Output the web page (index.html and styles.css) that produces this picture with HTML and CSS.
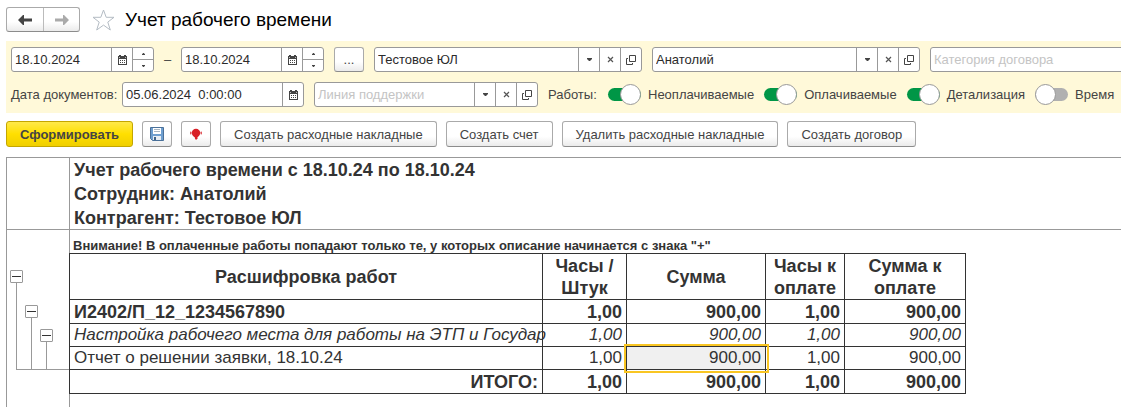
FILE: index.html
```
<!DOCTYPE html>
<html lang="ru">

<head>
<meta charset="UTF-8">
<meta name="viewport" content="width=device-width, initial-scale=1.0">
<title>Учет рабочего времени</title>
<link rel="stylesheet" href="styles.css">
</head>

<body>
<svg class="sprite" aria-hidden="true">
	<symbol id="i-cal" viewBox="0 0 9 10">
		<g fill="#444" shape-rendering="crispEdges">
			<path d="M0 1h9v9H0zM1 4v5h7V4z" fill-rule="evenodd" />
			<path d="M1 0h2v1H1zM6 0h2v1H6z" />
			<path d="M2 5h1v1H2zM4 5h1v1H4zM6 5h1v1H6zM2 7h1v1H2zM4 7h1v1H4zM6 7h1v1H6z" />
		</g>
		<path d="M1 2h1v1H1zM7 2h1v1H7z" fill="#bbb" />
	</symbol>
	<symbol id="i-down" viewBox="0 0 5 3">
		<path d="M0 0h5v1L3 3H2L0 1z" fill="#444" />
	</symbol>
	<symbol id="i-x" viewBox="0 0 7 7">
		<path d="M1 1l5 5M6 1L1 6" stroke="#555" stroke-width="1.2" fill="none" />
	</symbol>
	<symbol id="i-open" viewBox="0 0 10 10">
		<path d="M3.500.5h6v6h-6zM2 3.500H.5v6h6V8" stroke="#444" fill="none" />
	</symbol>
</svg>

<header class="header">
	<div class="nav">
		<button class="nav-btn" aria-label="Назад"><svg width="14" height="10" viewBox="0 0 14 10"><path d="M0 5l5-5h1v3.500h8v3H6V10H5z" fill="#444" /></svg></button>
		<button class="nav-btn" aria-label="Вперед"><svg width="14" height="10" viewBox="0 0 14 10"><path d="M14 5L9 0H8v3.500H0v3h8V10h1z" fill="#aaa" /></svg></button>
	</div>
	<svg class="star" width="23" height="22" viewBox="0 0 23 22"><path d="M11.500 1l2.700 7.300h7.800l-6.200 4.800 2.500 7.900-6.800-4.900L4.700 21l2.500-7.900L1 8.300h7.800z" fill="none" stroke="#b4bcc4" /></svg>
	<h1 class="title">Учет рабочего времени</h1>
</header>

<section class="filters">
	<div class="filter-row">
		<div class="field period">
			<input type="text" value="18.10.2024" aria-label="Начало периода">
			<button aria-label="Календарь"><svg width="9" height="10"><use href="#i-cal" /></svg></button>
			<div class="spin">
				<button aria-label="Больше"><svg class="up" width="3" height="2"><use href="#i-down" /></svg></button>
				<button aria-label="Меньше"><svg width="3" height="2"><use href="#i-down" /></svg></button>
			</div>
		</div>
		<span class="dash">–</span>
		<div class="field period">
			<input type="text" value="18.10.2024" aria-label="Конец периода">
			<button aria-label="Календарь"><svg width="9" height="10"><use href="#i-cal" /></svg></button>
			<div class="spin">
				<button aria-label="Больше"><svg class="up" width="3" height="2"><use href="#i-down" /></svg></button>
				<button aria-label="Меньше"><svg width="3" height="2"><use href="#i-down" /></svg></button>
			</div>
		</div>
		<button class="btn dots">...</button>
		<div class="field lookup">
			<input type="text" value="Тестовое ЮЛ" aria-label="Контрагент">
			<button aria-label="Выбрать"><svg width="5" height="3"><use href="#i-down" /></svg></button>
			<button aria-label="Очистить"><svg width="7" height="7"><use href="#i-x" /></svg></button>
			<button aria-label="Открыть"><svg width="10" height="10"><use href="#i-open" /></svg></button>
		</div>
		<div class="field lookup">
			<input type="text" value="Анатолий" aria-label="Сотрудник">
			<button aria-label="Выбрать"><svg width="5" height="3"><use href="#i-down" /></svg></button>
			<button aria-label="Очистить"><svg width="7" height="7"><use href="#i-x" /></svg></button>
			<button aria-label="Открыть"><svg width="10" height="10"><use href="#i-open" /></svg></button>
		</div>
		<div class="field lookup">
			<input type="text" placeholder="Категория договора" aria-label="Категория договора">
		</div>
	</div>

	<div class="filter-row">
		<label class="label" for="doc-date">Дата документов:</label>
		<div class="field doc-date">
			<input type="text" id="doc-date" value="05.06.2024  0:00:00">
			<button aria-label="Календарь"><svg width="9" height="10"><use href="#i-cal" /></svg></button>
		</div>
		<div class="field support">
			<input type="text" placeholder="Линия поддержки" aria-label="Линия поддержки">
			<button aria-label="Выбрать"><svg width="5" height="3"><use href="#i-down" /></svg></button>
			<button aria-label="Очистить"><svg width="7" height="7"><use href="#i-x" /></svg></button>
			<button aria-label="Открыть"><svg width="10" height="10"><use href="#i-open" /></svg></button>
		</div>
		<span class="works">Работы:</span>
		<label class="toggle"><input type="checkbox" checked>Неоплачиваемые</label>
		<label class="toggle"><input type="checkbox" checked>Оплачиваемые</label>
		<label class="toggle"><input type="checkbox" checked>Детализация</label>
		<label class="toggle"><input type="checkbox">Время</label>
	</div>
</section>

<div class="toolbar">
	<button class="btn primary">Сформировать</button>
	<button class="btn icon-btn" aria-label="Сохранить"><svg width="14" height="14" viewBox="0 0 14 14"><path d="M.5.5h13v13h-11l-2-2z" fill="#6f9fd0" stroke="#4a7099" /><path d="M3 1h8v6H3z" fill="#fff" /><path d="M4 2.500h6M4 4.500h6" stroke="#a9b6c2" /><path d="M3 9h8v4H3z" fill="#e8eef4" /><path d="M4 10h2v3H4z" fill="#3f6287" /></svg></button>
	<button class="btn icon-btn" aria-label="Поддержка"><svg width="12" height="12" viewBox="0 0 12 12"><circle cx="6" cy="5" r="4.200" fill="#d91f26" /><rect x="0" y="3.500" width="1.500" height="3" rx=".7" fill="#e0555a" /><rect x="10.500" y="3.500" width="1.500" height="3" rx=".7" fill="#e0555a" /><path d="M4.500 8h3v2.500L6 12l-1-1.500z" fill="#d91f26" /></svg></button>
	<button class="btn">Создать расходные накладные</button>
	<button class="btn">Создать счет</button>
	<button class="btn">Удалить расходные накладные</button>
	<button class="btn">Создать договор</button>
</div>

<main class="report">
	<div class="gutter"></div>
	<div class="report-head">
		<p>Учет рабочего времени с 18.10.24 по 18.10.24</p>
		<p>Сотрудник: Анатолий</p>
		<p>Контрагент: Тестовое ЮЛ</p>
	</div>
	<div class="gutter">
		<div class="tree">
			<div class="branch level-1"><button aria-label="Свернуть"></button></div>
			<div class="branch level-2"><button aria-label="Свернуть"></button></div>
			<div class="branch level-3"><button aria-label="Свернуть"></button></div>
		</div>
		<div class="tree-end"></div>
	</div>
	<div class="report-body">
		<p class="notice">Внимание! В оплаченные работы попадают только те, у которых описание начинается с знака "+"</p>
		<table class="table">
			<colgroup>
				<col class="c-name"><col class="c-hours"><col class="c-sum"><col class="c-hours-pay"><col class="c-sum-pay">
			</colgroup>
			<tr class="header-row">
				<th>Расшифровка работ</th>
				<th>Часы /<br>Штук</th>
				<th>Сумма</th>
				<th>Часы к<br>оплате</th>
				<th>Сумма к<br>оплате</th>
			</tr>
			<tr class="group">
				<td>И2402/П_12_1234567890</td>
				<td>1,00</td>
				<td>900,00</td>
				<td>1,00</td>
				<td>900,00</td>
			</tr>
			<tr class="subgroup">
				<td>Настройка рабочего места для работы на ЭТП и Государ</td>
				<td>1,00</td>
				<td>900,00</td>
				<td>1,00</td>
				<td>900,00</td>
			</tr>
			<tr>
				<td>Отчет о решении заявки, 18.10.24</td>
				<td>1,00</td>
				<td class="selected">900,00</td>
				<td>1,00</td>
				<td>900,00</td>
			</tr>
			<tr class="total">
				<td>ИТОГО:</td>
				<td>1,00</td>
				<td>900,00</td>
				<td>1,00</td>
				<td>900,00</td>
			</tr>
		</table>
	</div>
</main>
</body>

</html>
```

FILE: styles.css
```
* {
	box-sizing: border-box;
}

body {
	margin: 0;
	padding: 7px 0 0 6px;
	min-height: 100vh;
	display: flex;
	flex-direction: column;
	font-family: "Liberation Sans", Arial, sans-serif;
	font-size: 13px;
	color: #444;
	background-color: #fff;
	overflow: hidden;
}

button, input {
	font: inherit;
	color: inherit;
	margin: 0;
	padding: 0;
}

p {
	margin: 0;
}

svg {
	display: block;
}

.sprite {
	position: absolute;
	width: 0;
	height: 0;
}

/* header */
.header {
	display: flex;
	align-items: center;
	height: 25px;
}

.nav {
	display: flex;
	border: 1px solid #aaa;
	border-bottom-color: #8c8c8c;
	border-radius: 3px;
	background: linear-gradient(#fff 60%, #ebebeb);
}

.nav-btn {
	display: flex;
	align-items: center;
	justify-content: center;
	width: 36px;
	height: 23px;
	border: none;
	background: none;
}

.nav-btn + .nav-btn {
	border-left: 1px solid #bbb;
}

.star {
	margin: 0 10px 0 12px;
}

.title {
	margin: 0;
	font-size: 19px;
	font-weight: normal;
	color: #000;
}

/* filters */
.filters {
	margin-top: 9px;
	padding: 6px 0 6px 5px;
	background-color: #fff9d9;
	overflow: hidden;
}

.filter-row {
	display: flex;
	align-items: center;
	white-space: nowrap;
}

.filter-row > * {
	flex: none;
}

.filter-row + .filter-row {
	margin-top: 10px;
}

.field {
	display: flex;
	height: 25px;
	border: 1px solid #999;
	border-radius: 3px;
	background-color: #fff;
	color: #2b2b2b;
	overflow: hidden;
}

.field input {
	flex: 1;
	min-width: 0;
	padding: 0 3px;
	border: none;
	outline: none;
	background: none;
}

.field input::placeholder {
	color: #c4c4c4;
}

.field button {
	display: flex;
	align-items: center;
	justify-content: center;
	width: 21px;
	border: none;
	border-left: 1px solid #999;
	background: none;
}

.period {
	width: 143px;
}

.spin {
	display: flex;
	flex-direction: column;
}

.spin button {
	flex: 1;
}

.spin button + button {
	border-top: 1px solid #999;
}

.up {
	transform: rotate(180deg);
}

.dash {
	width: 27px;
	text-align: center;
}

.lookup {
	width: 268px;
	margin-right: 10px;
}

.label {
	width: 111px;
}

.doc-date {
	width: 182px;
	margin-right: 10px;
}

.doc-date input {
	white-space: pre;
}

.support {
	width: 224px;
	margin-right: 10px;
}

.works {
	width: 60px;
}

.toggle {
	display: flex;
	align-items: center;
	margin-right: 10px;
}

.toggle input {
	appearance: none;
	display: flex;
	align-items: center;
	width: 33px;
	height: 13px;
	margin-right: 7px;
	border-radius: 7px;
	background-color: #b0b0b0;
}

.toggle input::before {
	content: "";
	flex: none;
	width: 19px;
	height: 19px;
	border: 1px solid #999;
	border-radius: 50%;
	background-color: #fff;
}

.toggle input:checked {
	justify-content: flex-end;
	background-color: #009646;
}

/* buttons */
.btn {
	display: flex;
	align-items: center;
	justify-content: center;
	flex: none;
	height: 26px;
	padding: 0 13px;
	border: 1px solid #aaa;
	border-bottom-color: #8c8c8c;
	border-radius: 3px;
	background: linear-gradient(#fff 60%, #ebebeb);
	white-space: nowrap;
}

.dots {
	width: 30px;
	height: 25px;
	margin: 0 10px;
	padding: 0;
}

.toolbar {
	display: flex;
	gap: 9px;
	margin-top: 8px;
}

.icon-btn {
	width: 30px;
	padding: 0;
}

.primary {
	border-color: #c4a600;
	background: linear-gradient(#ffe94a, #ffdf00 50%, #f0cf00);
	font-weight: bold;
}

/* report */
.report {
	flex: 1;
	display: grid;
	grid-template-columns: 63px 1fr;
	grid-template-rows: auto 1fr;
	margin-top: 10px;
	border-top: 1px solid #999;
	border-left: 1px solid #999;
	color: #333;
}

.gutter {
	border-right: 1px solid #999;
}

.report-head {
	height: 72px;
	padding-left: 4px;
	border-bottom: 1px solid #999;
	font-size: 18px;
	font-weight: bold;
	line-height: 24px;
}

.gutter:first-child {
	border-bottom: 1px solid #999;
}

.tree {
	display: flex;
	gap: 2px;
	height: 139px;
	padding-left: 3px;
}

.branch {
	display: flex;
	flex-direction: column;
	align-items: center;
	width: 13px;
}

.branch::after {
	content: "";
	flex: 1;
	width: 1px;
	background-color: #999;
}

.branch button {
	display: flex;
	align-items: center;
	justify-content: center;
	width: 13px;
	height: 13px;
	border: 1px solid #999;
	border-radius: 1px;
	background-color: #fff;
}

.branch button::before {
	content: "";
	width: 9px;
	height: 1px;
	background-color: #333;
}

.level-1 {
	padding-top: 40px;
}

.level-2 {
	padding-top: 75px;
}

.level-3 {
	padding-top: 99px;
}

.tree-end {
	height: 1px;
	margin-left: 9px;
	background-color: #999;
}

.notice {
	height: 23px;
	padding-left: 3px;
	font-size: 13px;
	font-weight: bold;
	line-height: 31px;
	white-space: nowrap;
}

.table {
	table-layout: fixed;
	width: 897px;
	margin-left: -1px;
	border-collapse: collapse;
	font-size: 17px;
	line-height: 22px;
}

.c-name {
	width: 473px;
}

.c-hours {
	width: 84px;
}

.c-sum {
	width: 139px;
}

.c-hours-pay {
	width: 79px;
}

.c-sum-pay {
	width: 121px;
}

.table th, .table td {
	height: 23px;
	padding: 0 4px;
	border: 1px solid #333;
	text-align: right;
	white-space: nowrap;
}

.table th {
	height: 46px;
	font-size: 18px;
	text-align: center;
}

.table td:first-child {
	text-align: left;
}

.table .group td, .table .total td {
	height: 24px;
	font-size: 18px;
	font-weight: bold;
}

.table .total td:first-child {
	text-align: right;
}

.subgroup {
	font-style: italic;
}

.table .selected {
	background-color: #f0f0f0;
	outline: 2px solid #f9c623;
	outline-offset: 1px;
}
```
